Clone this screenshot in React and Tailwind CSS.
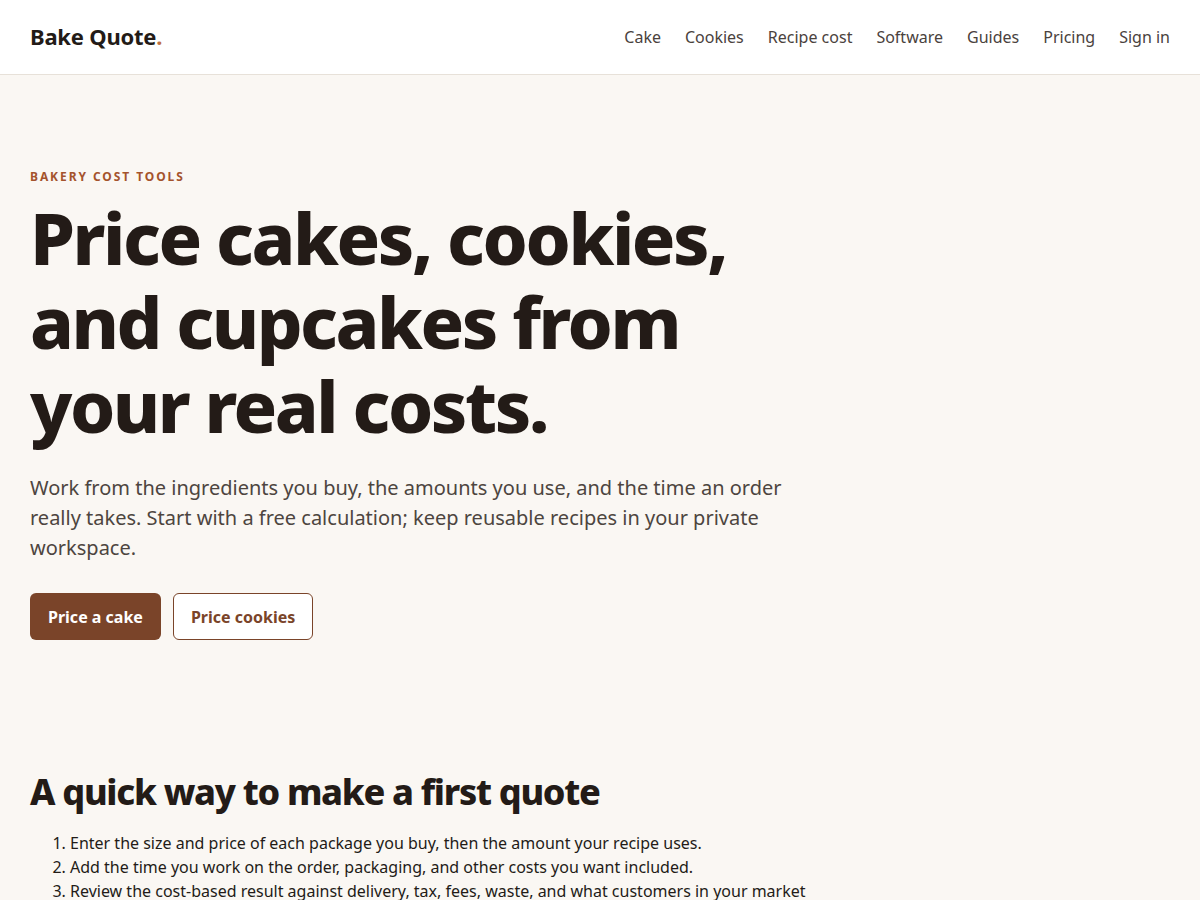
export default function App() {
  const font = { fontFamily: '"Noto Sans", "Open Sans", sans-serif' };
  return (
    <div className="min-h-screen bg-[#faf7f3] text-[#231b17]" style={font}>
      <header className="h-[75px] bg-white border-b border-[#e7e1d9] flex items-center justify-between px-[30px]">
        <div className="text-[22px] font-bold text-[#231b17] tracking-[-0.01em] leading-[28px] -mt-[2px]">
          Bake Quote<span className="text-[#c0703f]">.</span>
        </div>
        <nav className="flex items-center gap-6 text-[16px] text-[#4a423d]">
          <a>Cake</a>
          <a>Cookies</a>
          <a>Recipe cost</a>
          <a>Software</a>
          <a>Guides</a>
          <a>Pricing</a>
          <a>Sign in</a>
        </nav>
      </header>
      <main className="px-[30px]">
        <section className="pt-[94px] pb-[130px] max-w-[790px]">
          <p className="text-[12px] font-bold tracking-[0.16em] text-[#a4532c] uppercase leading-[16px]">
            Bakery cost tools
          </p>
          <h1 className="mt-[10px] text-[72px] font-extrabold leading-[84px] tracking-[-0.034em] text-[#231b17]">
            Price cakes, cookies, and cupcakes from your real costs.
          </h1>
          <p className="mt-[26px] text-[20px] leading-[30px] text-[#4d4540] max-w-[780px]">
            Work from the ingredients you buy, the amounts you use, and the time an order really takes. Start with a free calculation; keep reusable recipes in your private workspace.
          </p>
          <div className="mt-[30px] flex gap-3">
            <a className="h-[47px] px-[18px] flex items-center rounded-[6px] bg-[#7a4429] text-white font-bold text-[16px]">
              Price a cake
            </a>
            <a className="h-[47px] px-[17px] flex items-center rounded-[6px] bg-white border border-[#7a4429] text-[#7a4429] font-bold text-[16px]">
              Price cookies
            </a>
          </div>
        </section>
        <section className="max-w-[790px]">
          <h2 className="text-[36px] font-extrabold leading-[44px] tracking-[-0.036em] text-[#231b17]">
            A quick way to make a first quote
          </h2>
          <ol className="mt-[17px] list-decimal pl-[40px] text-[16px] leading-[24px] text-[#231b17]">
            <li>Enter the size and price of each package you buy, then the amount your recipe uses.</li>
            <li>Add the time you work on the order, packaging, and other costs you want included.</li>
            <li>Review the cost-based result against delivery, tax, fees, waste, and what customers in your market expect to pay.</li>
          </ol>
        </section>
      </main>
    </div>
  );
}
